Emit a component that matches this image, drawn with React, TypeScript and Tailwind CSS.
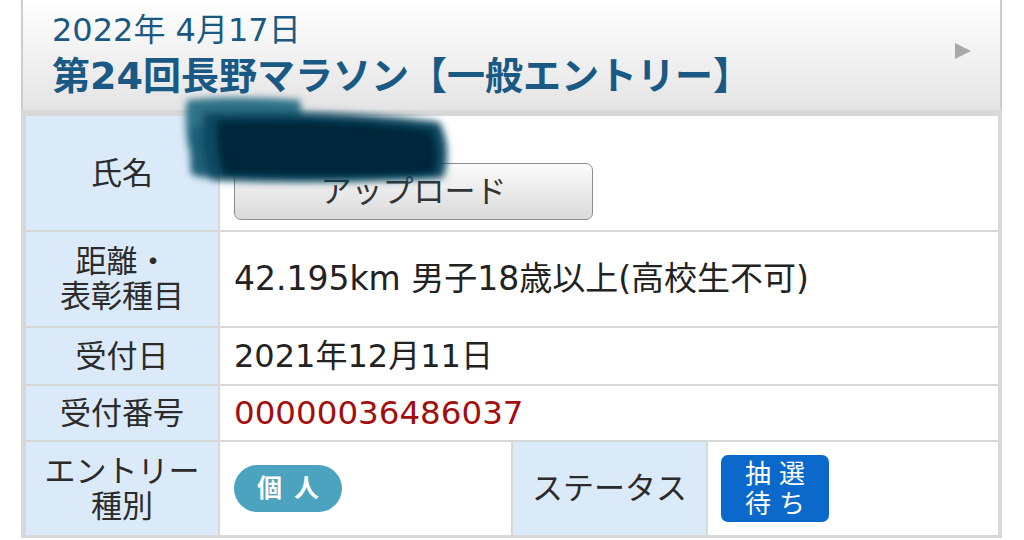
import React from "react";

const Label = ({ children }: { children: React.ReactNode }) => (
  <div className="bg-[#dbeaf8] flex items-center justify-center text-center text-[31px] leading-[35px] text-[#2b2b2b]">
    {children}
  </div>
);

export default function App() {
  return (
    <div className="w-[1024px] h-[540px] bg-white overflow-hidden relative font-['DejaVu_Sans','Noto_Sans_CJK_JP',sans-serif]">
      <div className="ml-[21px] w-[981px]">
        <header className="relative h-[110px] border-x-2 border-[#cdcdcd] bg-gradient-to-b from-white to-[#e4e4e4] pl-[29px] pt-[10px] text-[#1a5983]">
          <div className="text-[32px] leading-[40px]">2022年 4月17日</div>
          <div className="text-[38px] leading-[52px] font-bold">第24回長野マラソン【一般エントリー】</div>
          <svg className="absolute right-[28px] top-[42px]" width="18" height="18" viewBox="0 0 18 18">
            <polygon points="1,1 17,9 1,17" fill="#a9a9a9" />
          </svg>
        </header>
        <div className="bg-[#d8d8d8] pt-[6px] pl-[5px] pr-[4px] pb-[3px]">
          <div className="grid grid-cols-[192px_291px_193px_290px] grid-rows-[114px_94px_56px_54px_93px] gap-[2px]">
            <Label>氏名</Label>
            <div className="col-span-3 bg-white flex flex-col justify-end pl-[14px] pb-[10px]">
              <button className="w-[359px] h-[57px] rounded-[7px] border border-[#8c8c8c] bg-gradient-to-b from-[#fbfbfb] to-[#dadada] text-[31px] text-[#333] leading-none">
                アップロード
              </button>
            </div>

            <Label>
              <span>
                距離・
                <br />
                表彰種目
              </span>
            </Label>
            <div className="col-span-3 bg-white flex items-center pl-[14px] text-[33px] text-[#222]">
              42.195km 男子18歳以上(高校生不可)
            </div>

            <Label>受付日</Label>
            <div className="col-span-3 bg-white flex items-center pl-[14px] text-[32px] text-[#222]">
              2021年12月11日
            </div>

            <Label>受付番号</Label>
            <div className="col-span-3 bg-white flex items-center pl-[14px] text-[32.5px] text-[#a30d0d]">
              00000036486037
            </div>

            <Label>
              <span>
                エントリー
                <br />
                種別
              </span>
            </Label>
            <div className="bg-white flex items-center pl-[14px]">
              <span className="w-[108px] h-[47px] rounded-full bg-[#4ba3bf] text-white text-[25px] font-bold flex items-center justify-center tracking-[12px] pl-[12px]">
                個人
              </span>
            </div>
            <Label>ステータス</Label>
            <div className="bg-white flex items-center pl-[13px]">
              <span className="w-[108px] h-[67px] rounded-[7px] bg-[#0b69cb] text-white text-[26px] leading-[30px] flex flex-col items-center justify-center tracking-[8px] pl-[8px]">
                <span>抽選</span>
                <span>待ち</span>
              </span>
            </div>
          </div>
        </div>
      </div>

      <svg className="absolute left-[175px] top-[90px] pointer-events-none" width="290" height="105" viewBox="0 0 290 105">
        <defs>
          <filter id="blur" x="-20%" y="-20%" width="140%" height="140%">
            <feGaussianBlur stdDeviation="3.5" />
          </filter>
        </defs>
        <g filter="url(#blur)">
          <path d="M12,10 C50,6 90,8 125,10 L130,58 C90,60 50,62 14,60 C10,45 10,25 12,10 Z" fill="#2f7288" />
          <path d="M14,40 C20,36 30,34 34,36 L38,88 C30,88 20,86 16,84 Z" fill="#1f5f77" />
          <path d="M28,22 C120,20 200,24 264,32 C274,50 274,72 268,88 C200,92 110,94 36,90 C28,68 26,45 28,22 Z" fill="#0b4a62" />
          <path d="M42,30 C130,28 200,32 256,40 C264,56 264,74 258,84 C190,88 110,88 48,84 C42,64 40,48 42,30 Z" fill="#03283b" />
        </g>
      </svg>
    </div>
  );
}
